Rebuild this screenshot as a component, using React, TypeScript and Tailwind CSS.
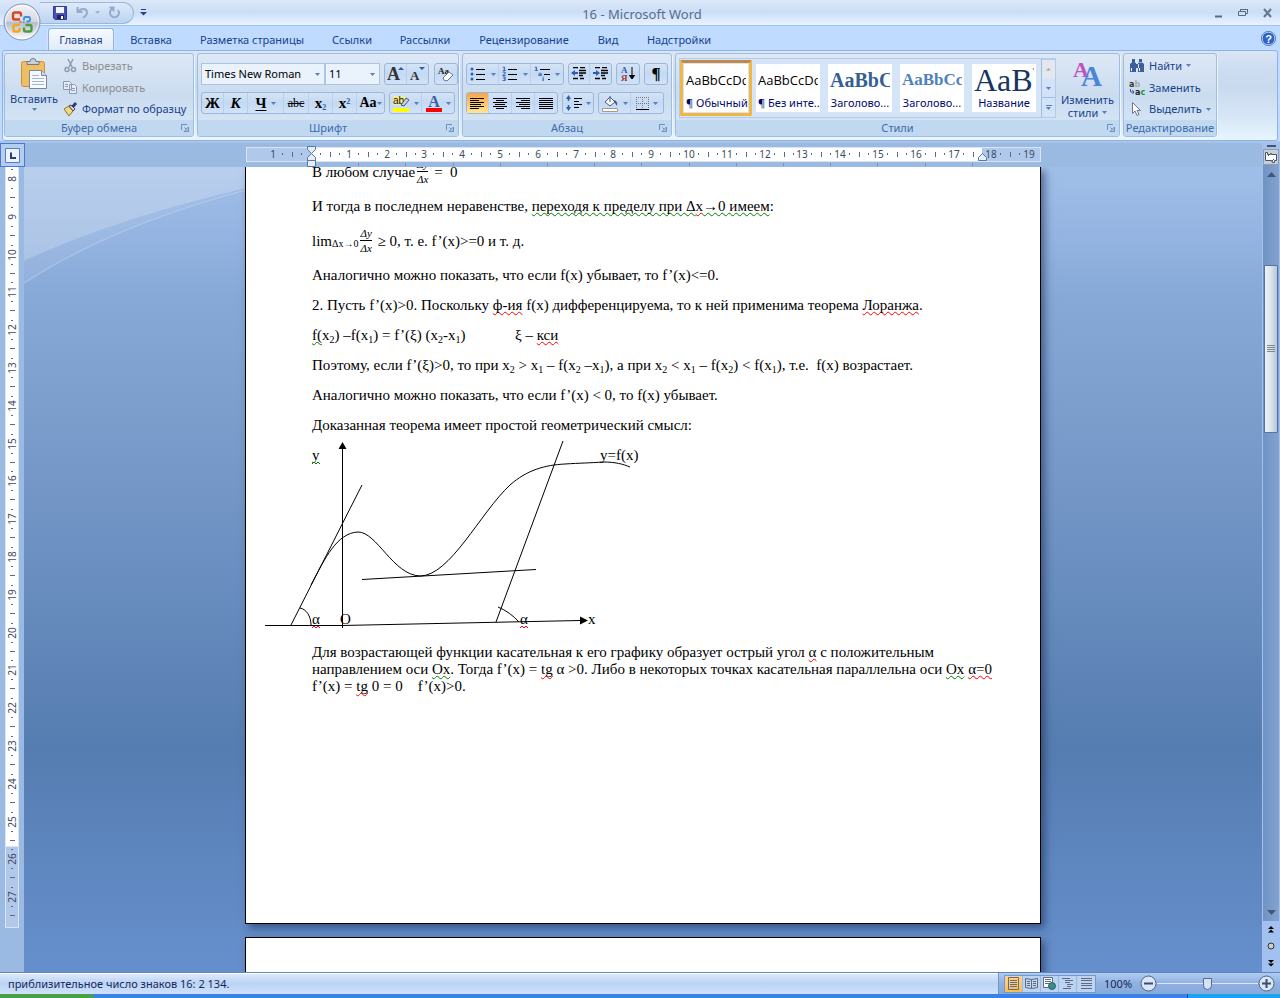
import type { ReactNode } from "react"

interface TabInterface {
  name: string
  width: string
}

const tabs: TabInterface[] = [
  { name: "Главная", width: "w-[66px]" },
  { name: "Вставка", width: "w-[74px]" },
  { name: "Разметка страницы", width: "w-[128px]" },
  { name: "Ссылки", width: "w-[72px]" },
  { name: "Рассылки", width: "w-[74px]" },
  { name: "Рецензирование", width: "w-[124px]" },
  { name: "Вид", width: "w-[44px]" },
  { name: "Надстройки", width: "w-[98px]" },
]

interface StyleInterface {
  name: string
  sample: string
  look: string
}

const styles: StyleInterface[] = [
  { name: "¶ Обычный", sample: "AaBbCcDd", look: "font-['Open_Sans'] text-[13px] text-black" },
  { name: "¶ Без инте...", sample: "AaBbCcDd", look: "font-['Open_Sans'] text-[13px] text-black" },
  { name: "Заголово...", sample: "AaBbCc", look: "font-['Liberation_Serif'] text-[20px] font-bold text-[#365f91]" },
  { name: "Заголово...", sample: "AaBbCc", look: "font-['Liberation_Serif'] text-[17px] font-bold text-[#4f81bd]" },
  { name: "Название", sample: "AaBb", look: "font-['Liberation_Serif'] text-[32px] text-[#17365d]" },
]

const Arrow = ({ color = "#5a7fb8" }: { color?: string }) => (
  <svg width="5" height="3" className="shrink-0" aria-hidden="true">
    <path d="M0 0h5L2.5 3z" fill={color} />
  </svg>
)

const Group = ({ title, width, launcher = true, children }: { title: string; width: string; launcher?: boolean; children: ReactNode }) => (
  <section className={`flex shrink-0 flex-col overflow-hidden rounded-[3px] border border-[#9dbde2] bg-gradient-to-b from-[#dde8f5] via-[#cbdcf0] to-[#d8e8f7] shadow-[1px_1px_0_#eef6ff] ${width}`}>
    <div className="flex min-h-0 flex-1">{children}</div>
    <div className="relative h-4 bg-[#c1d9f0] text-center leading-4 whitespace-nowrap text-[#3e6aaa]">
      {title}
      {launcher && (
        <button aria-label={`${title}: параметры`} className="absolute top-1 right-1">
          <svg width="8" height="8" fill="none" stroke="#6d8fbd">
            <path d="M.5 6V.5H6M3.500 3.500l3 3M7.500 3v4.500H3z" />
          </svg>
        </button>
      )}
    </div>
  </section>
)

const Bar = ({ children }: { children: ReactNode }) => (
  <div className="flex h-[22px] shrink-0 divide-x divide-[#b9cfec] rounded-[3px] border border-[#9ab8de] bg-gradient-to-b from-[#d5e4f6] via-[#c4d9f3] to-[#d2e3f7]">
    {children}
  </div>
)

const Tool = ({ label, width, active, arrow, children }: { label: string; width: string; active?: boolean; arrow?: boolean; children: ReactNode }) => (
  <button
    aria-label={label}
    className={`flex h-5 shrink-0 items-center justify-center gap-1 leading-5 text-black ${width} ${active ? "bg-gradient-to-b from-[#f7a24b] via-[#fcc566] to-[#ffe795]" : ""}`}
  >
    {children}
    {arrow && <Arrow />}
  </button>
)

const Lines = ({ rows }: { rows: number[][] }) => (
  <svg width="15" height="13" stroke="#000" aria-hidden="true">
    {rows.map(([x1, x2], i) => (
      <path key={i} d={`M${x1} ${i * 2 + 1.5}H${x2}`} />
    ))}
  </svg>
)

// an empty list of marks draws plain bullets
const ListIcon = ({ marks = [], step = 0 }: { marks?: string[]; step?: number }) => (
  <svg width="17" height="16" className="overflow-visible" aria-hidden="true">
    {[0, 1, 2].map((i) => (
      <g key={i}>
        {marks[i] ? (
          <text x={i * step} y={i * 5 + 5} fontSize="6" fontWeight="bold" fontFamily="DejaVu Sans" fill="#2f5cae">{marks[i]}</text>
        ) : (
          <circle cx="2" cy={i * 5 + 3} r="1.500" fill="#2f5cae" />
        )}
        <path d={`M${6 + i * step} ${i * 5 + 3.5}H${step ? 16 : 15}`} stroke="#000" />
      </g>
    ))}
  </svg>
)

const OfficeLogo = () => (
  <svg width="38" height="38" viewBox="0 0 38 38" aria-hidden="true">
    <defs>
      <linearGradient id="orb" x1="0" y1="0" x2="0" y2="1">
        <stop offset="0" stopColor="#f4f6f9" />
        <stop offset=".48" stopColor="#d3d8e2" />
        <stop offset=".52" stopColor="#b4bccb" />
        <stop offset="1" stopColor="#ffffff" />
      </linearGradient>
    </defs>
    <circle cx="19" cy="19" r="18" fill="url(#orb)" stroke="#7f93b5" />
    <circle cx="19" cy="19" r="16.500" fill="none" stroke="#fff" strokeOpacity=".7" />
    <g fill="none" strokeWidth="2.400">
      <path d="M17 16.500h-5q-2 0-2-2v-3q0-2 2-2h4q2 0 2 2v2" stroke="#d9481c" />
      <path d="M21 17.500v-2q0-1.500 1.500-1.500h3q1.500 0 1.500 1.500v1.500q0 1.500-1.500 1.500h-2" stroke="#3c8fd6" strokeWidth="1.800" />
      <path d="M16.500 25v2q0 1.500-1.500 1.500h-3q-1.500 0-1.500-1.500v-3q0-2 2-2h4" stroke="#f4a81d" />
      <path d="M21 24.500v2q0 2 2 2h3.500q2 0 2-2v-2.500q0-2-2-2h-4" stroke="#4a9b3c" />
    </g>
    <path d="M16.500 18h2v2h-2z" fill="#e8792b" />
    <path d="M20 18.500h1.500V20H20z" fill="#3c8fd6" />
  </svg>
)

const TitleBar = () => (
  <header className="flex h-[26px] shrink-0 items-center border-b border-[#9cc6f2] bg-gradient-to-b from-[#dce8f8] via-[#cbdef7] to-[#eaf3fe]">
    <div className="ml-[40px] flex h-[22px] w-[94px] items-center rounded-r-full border border-l-0 border-[#9db8dc] bg-gradient-to-b from-[#dfeafa] to-[#bcd3f1] pl-[13px]">
      <button aria-label="Сохранить">
        <svg width="14" height="14">
          <path d="M.5.5h13v13H2L.5 12z" fill="#4a50b8" stroke="#33389a" />
          <path d="M3 1h8v6H3z" fill="#f2f5fc" />
          <path d="M4 9h7v4H4z" fill="#20235e" />
          <path d="M8 10h2v3H8z" fill="#fff" />
        </svg>
      </button>
      <button aria-label="Отменить" className="ml-[9px]">
        <svg width="13" height="13" fill="none" stroke="#94abcf" strokeWidth="2">
          <path d="M1.500 1v5h5M2 6C5 2 11 2 11 6.500c0 2-2 4-4 5.500" />
        </svg>
      </button>
      <span className="ml-[6px]"><Arrow color="#9fb3d2" /></span>
      <button aria-label="Повторить" className="ml-[8px]">
        <svg width="13" height="13" fill="none" stroke="#94abcf" strokeWidth="2">
          <path d="M1.500 1.500h4v4M5 2.500A4.500 4.500 0 1 0 10 4" />
        </svg>
      </button>
    </div>
    <button aria-label="Настройка панели быстрого доступа" className="ml-[6px]">
      <svg width="7" height="7"><path d="M1 .5h5" stroke="#26427c" /><path d="M0 3h7L3.500 6.500z" fill="#26427c" /></svg>
    </button>
    <h1 className="flex-1 pt-[2px] pr-[76px] text-center text-[13px] text-[#5a6b8c]">16 - Microsoft Word</h1>
    <div className="flex items-center gap-[15px] pr-[7px]">
      <button aria-label="Свернуть"><svg width="10" height="10"><path d="M2 8.500h7" stroke="#5b6b85" strokeWidth="2" /></svg></button>
      <button aria-label="Свернуть в окно">
        <svg width="10" height="10" fill="none" stroke="#5b6b85"><path d="M2.500 3V1.500h7v4H8M.5 3.500h7v4h-7zM2 1.500h8" /></svg>
      </button>
      <button aria-label="Закрыть"><svg width="10" height="10"><path d="M1 1l7 8M8 1L1 9" stroke="#66758f" strokeWidth="2" /></svg></button>
    </div>
  </header>
)

const TabRow = () => (
  <nav className="flex h-6 shrink-0 items-end bg-[#bfdbff] pl-[48px]">
    {tabs.map((tab, i) => (
      <button
        key={tab.name}
        className={`h-[22px] shrink-0 pt-px text-center whitespace-nowrap text-[#15428b] ${tab.width} ${i === 0 ? "rounded-t-[3px] border border-b-0 border-[#8db2e3] bg-gradient-to-b from-[#f6faff] to-[#e0ebf8] shadow-[0_0_2px_#fff]" : ""}`}
      >
        {tab.name}
      </button>
    ))}
    <button aria-label="Справка" className="mr-1 mb-1 ml-auto">
      <svg width="15" height="15">
        <circle cx="7.500" cy="7.500" r="6.500" fill="#2d62c9" stroke="#fff" />
        <circle cx="7.500" cy="7.500" r="7" fill="none" stroke="#3c6dbf" />
        <text x="7.500" y="11.500" fontSize="11" fontWeight="bold" textAnchor="middle" fontFamily="Liberation Sans" fill="#fff">?</text>
      </svg>
    </button>
  </nav>
)

const Clipboard = () => (
  <Group title="Буфер обмена" width="w-[190px]">
    <button className="flex w-[58px] shrink-0 flex-col items-center pt-1 text-[#15428b]">
      <svg width="28" height="32" aria-hidden="true">
        <rect x="1.500" y="3.500" width="23" height="25" rx="2" fill="#efbd62" stroke="#c99238" />
        <path d="M7 3.500h3q0-3 3-3t3 3h3v3H7z" fill="#c9ced8" stroke="#70798c" />
        <path d="M9.500 12.500h12l5 5v13h-17z" fill="#f7faff" stroke="#7485a5" />
        <path d="M21.500 12.500v5h5" fill="#cfdcf0" stroke="#7485a5" />
        <path d="M12 17.500h7M12 20.500h12M12 23.500h12M12 26.500h12" stroke="#a4b4cf" />
      </svg>
      <span className="leading-[18px]">Вставить</span>
      <Arrow />
    </button>
    <div className="flex flex-col pt-px">
      <button className="flex h-[22px] items-center gap-1 text-[#8d8d8d]">
        <svg width="15" height="15" fill="none" stroke="#8d9ab5" strokeWidth="1.500">
          <path d="M5 1l4 8M10 1L6 9" /><circle cx="4" cy="11.500" r="2" /><circle cx="10.500" cy="11.500" r="2" />
        </svg>
        Вырезать
      </button>
      <button className="flex h-[22px] items-center gap-1 text-[#8d8d8d]">
        <svg width="15" height="15" fill="#e6ecf6" stroke="#8d9ab5">
          <path d="M.5 1.500h6l2 2v6h-8zM6.500 4.500h5l2 2v7h-7zM2 4.500h3M2 6.500h3M8 8.500h4M8 10.500h4" />
        </svg>
        Копировать
      </button>
      <button className="flex h-[22px] items-center gap-1 text-[#15428b]">
        <svg width="15" height="15">
          <path d="M1 7l5-3 4 5-4 5z" fill="#f3d77f" stroke="#8d7434" />
          <path d="M6 4l2-1 4 4-2 2z" fill="#ddd" stroke="#444" />
          <path d="M9.500 5L13 1" stroke="#2b3f77" strokeWidth="3" />
        </svg>
        <span className="whitespace-nowrap">Формат по образцу</span>
      </button>
    </div>
  </Group>
)

const Combo = ({ label, value, width }: { label: string; value: string; width: string }) => (
  <div className={`relative h-[22px] shrink-0 border border-[#abc3e4] bg-[#eaf2fb] ${width}`}>
    <select aria-label={label} className="h-full w-full appearance-none px-[3px] text-black outline-none">
      <option>{value}</option>
    </select>
    <span className="pointer-events-none absolute top-[9px] right-1"><Arrow /></span>
  </div>
)

const FontGroup = () => (
  <Group title="Шрифт" width="w-[262px]">
    <div className="flex flex-col gap-[7px] px-[3px] pt-[9px] font-['Liberation_Serif']">
      <div className="flex font-['Noto_Sans']">
        <Combo label="Шрифт" value="Times New Roman" width="w-[124px]" />
        <Combo label="Размер" value="11" width="w-[55px]" />
        <div className="ml-1 flex gap-[5px] font-['Liberation_Serif']">
          <Bar>
            <Tool label="Увеличить размер" width="w-[22px]">
              <svg width="18" height="18" fontFamily="Liberation Serif" fontWeight="bold">
                <text x="0" y="15" fontSize="18" fill="#333">A</text>
                <path d="M11 5h6l-3-3z" fill="#2f5cae" />
              </svg>
            </Tool>
            <Tool label="Уменьшить размер" width="w-[21px]">
              <svg width="18" height="18" fontFamily="Liberation Serif" fontWeight="bold">
                <text x="1" y="15" fontSize="13" fill="#333">A</text>
                <path d="M10 2h6l-3 3z" fill="#2f5cae" />
              </svg>
            </Tool>
          </Bar>
          <Bar>
            <Tool label="Очистить формат" width="w-[22px]">
              <svg width="18" height="17">
                <text x="1" y="8" fontSize="9" fontWeight="bold" fontFamily="Liberation Serif" fill="#222">Aa</text>
                <path d="M6 12l6-6 4 3-6 6q-4 0-4-3z" fill="#fff" stroke="#66779b" />
              </svg>
            </Tool>
          </Bar>
        </div>
      </div>
      <div className="flex gap-1">
        <Bar>
          <Tool label="Полужирный" width="w-[22px]"><b className="text-[15px]">Ж</b></Tool>
          <Tool label="Курсив" width="w-[24px]"><b className="text-[15px] italic">К</b></Tool>
          <Tool label="Подчеркнутый" width="w-[36px]" arrow><b className="text-[15px] underline underline-offset-2">Ч</b></Tool>
          <Tool label="Зачеркнутый" width="w-[25px]"><b className="text-[12px] font-normal line-through">abc</b></Tool>
          <Tool label="Подстрочный" width="w-[24px]"><b className="text-[15px]">x<sub className="text-[8px] text-[#2f5cae]">2</sub></b></Tool>
          <Tool label="Надстрочный" width="w-[24px]"><b className="text-[15px]">x<sup className="text-[8px] text-[#2f5cae]">2</sup></b></Tool>
          <Tool label="Регистр" width="w-[27px]"><b className="text-[14px]">Aa</b><span className="-ml-1"><Arrow /></span></Tool>
        </Bar>
        <Bar>
          <Tool label="Цвет выделения" width="w-[32px]" arrow>
            <svg width="17" height="17">
              <path d="M0 1h12v9H0z" fill="#f7f08a" />
              <text x="0" y="9" fontSize="10" fontFamily="Liberation Sans" fill="#111">ab</text>
              <path d="M8 10l5-7 3 2-5 6z" fill="#c6d0e2" stroke="#4c5a78" />
              <path d="M0 13h16v4H0z" fill="#ff0" />
            </svg>
          </Tool>
          <Tool label="Цвет текста" width="w-[32px]" arrow>
            <svg width="16" height="17" className="overflow-visible">
              <text x="8" y="12" fontSize="16" fontWeight="bold" textAnchor="middle" fontFamily="Liberation Serif" fill="#3b5fa3">A</text>
              <path d="M0 13h16v4H0z" fill="red" />
            </svg>
          </Tool>
        </Bar>
      </div>
    </div>
  </Group>
)

const ParagraphGroup = () => (
  <Group title="Абзац" width="w-[210px]">
    <div className="flex flex-col gap-[7px] px-[3px] pt-[9px]">
      <div className="flex gap-1">
        <Bar>
          <Tool label="Маркеры" width="w-[32px]" arrow><ListIcon /></Tool>
          <Tool label="Нумерация" width="w-[32px]" arrow><ListIcon marks={["1", "2", "3"]} /></Tool>
          <Tool label="Многоуровневый список" width="w-[32px]" arrow><ListIcon marks={["1", "a", "i"]} step={4} /></Tool>
        </Bar>
        <Bar>
          <Tool label="Уменьшить отступ" width="w-[21px]">
            <svg width="16" height="14"><path d="M2 .5h5M9 .5h5M8 3.500h7M8 6h7M8 8.500h4M2 11.500h5M9 11.500h4" stroke="#000" strokeWidth="1.500" /><path d="M0 6l4-3v2h3v2H4v2z" fill="#2f5cae" /></svg>
          </Tool>
          <Tool label="Увеличить отступ" width="w-[21px]">
            <svg width="16" height="14"><path d="M2 .5h5M9 .5h5M8 3.500h7M8 6h7M8 8.500h4M2 11.500h5M9 11.500h4" stroke="#000" strokeWidth="1.500" /><path d="M7 6L3 3v2H0v2h3v2z" fill="#2f5cae" /></svg>
          </Tool>
        </Bar>
        <Bar>
          <Tool label="Сортировка" width="w-[22px]">
            <svg width="16" height="18" fontFamily="Liberation Serif" fontWeight="bold" fontSize="9">
              <text x="1" y="8" fill="#2f5cae">А</text>
              <text x="1" y="16" fill="#9b3a32">Я</text>
              <path d="M12 2v11M9.500 10.500L12 14l2.500-3.500z" stroke="#000" />
            </svg>
          </Tool>
        </Bar>
        <Bar>
          <Tool label="Знаки абзаца" width="w-[22px]"><span className="font-['Liberation_Serif'] text-[17px] font-bold">¶</span></Tool>
        </Bar>
      </div>
      <div className="flex gap-1">
        <Bar>
          <Tool label="По левому краю" width="w-[22px]" active><Lines rows={[[0, 14], [0, 9], [0, 14], [0, 11], [0, 14], [0, 9]]} /></Tool>
          <Tool label="По центру" width="w-[23px]"><Lines rows={[[0, 14], [3, 11], [0, 14], [2, 12], [0, 14], [3, 11]]} /></Tool>
          <Tool label="По правому краю" width="w-[23px]"><Lines rows={[[0, 14], [5, 14], [0, 14], [3, 14], [0, 14], [5, 14]]} /></Tool>
          <Tool label="По ширине" width="w-[22px]"><Lines rows={[[0, 14], [0, 14], [0, 14], [0, 14], [0, 14], [0, 14]]} /></Tool>
        </Bar>
        <Bar>
          <Tool label="Интервал" width="w-[30px]" arrow>
            <svg width="16" height="16">
              <path d="M2.500 3v3M2.500 10v3" stroke="#2f5cae" strokeWidth="1.500" />
              <path d="M0 4l2.500-4L5 4zM0 12l2.500 4L5 12z" fill="#2f5cae" />
              <path d="M8 3.500h8M8 6.500h5M8 9.500h8M8 12.500h5" stroke="#000" />
            </svg>
          </Tool>
        </Bar>
        <Bar>
          <Tool label="Заливка" width="w-[32px]" arrow>
            <svg width="17" height="17">
              <path d="M3 7l5-5 5 5-5 4z" fill="#f4f6fa" stroke="#4d5c7c" />
              <path d="M8 7V1" stroke="#4d5c7c" />
              <path d="M12 5q4 1 3 6l-2-3z" fill="#35589c" />
              <path d="M.5 13.500h15v3H.5z" fill="#fff" stroke="#a09c86" />
            </svg>
          </Tool>
          <Tool label="Границы" width="w-[32px]" arrow>
            <svg width="13" height="13" fill="none" stroke="#777" strokeDasharray="1 1">
              <path d="M.5 0v12M6.500 0v12M12.500 0v12M0 .5h13M0 6.500h13" />
              <path d="M0 12.500h13" stroke="#000" strokeDasharray="none" />
            </svg>
          </Tool>
        </Bar>
      </div>
    </div>
  </Group>
)

const StylesGroup = () => (
  <Group title="Стили" width="w-[445px]">
    <div className="mt-1 ml-[3px] flex h-[60px] w-[377px] shrink-0 border border-[#b3cbe8] bg-[#d5e5f7]">
      {styles.map((style, i) => (
        <button
          key={i}
          className={`mt-px flex h-[56px] w-[72px] shrink-0 flex-col items-center border-[3px] pt-px ${i === 0 ? "rounded-[2px] border-[#f3b63f] border-t-[#c18a4a]" : "border-transparent"}`}
        >
          <span className="flex h-12 w-16 flex-col overflow-hidden bg-white px-[2px]">
            <span className={`h-[32px] shrink-0 overflow-hidden text-left leading-[32px] ${style.look}`}>{style.sample}</span>
            <span className="text-center text-[11px] leading-[14px] whitespace-nowrap text-[#000a6e]">{style.name}</span>
          </span>
        </button>
      ))}
      <div className="ml-auto flex w-[14px] flex-col divide-y divide-[#9fbce2] border-l border-[#9fbce2] bg-[#d3e3f7]">
        <button aria-label="Вверх" className="flex flex-1 rotate-180 items-center justify-center bg-[#e4e8ee]"><Arrow color="#a6a9ad" /></button>
        <button aria-label="Вниз" className="flex flex-1 items-center justify-center"><Arrow /></button>
        <button aria-label="Все стили" className="flex flex-1 flex-col items-center justify-center gap-px"><span className="h-px w-[6px] bg-[#5a7fb8]" /><Arrow /></button>
      </div>
    </div>
    <button className="flex flex-1 flex-col items-center pt-[5px] leading-[13px] text-[#15428b]">
      <svg width="30" height="30" fontFamily="Liberation Serif" fontWeight="bold">
        <text x="0" y="18" fontSize="22" fill="#c04fc0">A</text>
        <text x="8" y="27" fontSize="29" fill="#4a86d8">A</text>
      </svg>
      <span className="mt-1">Изменить</span>
      <span className="flex items-center gap-1">стили <Arrow /></span>
    </button>
  </Group>
)

const EditGroup = () => (
  <Group title="Редактирование" width="w-[94px]" launcher={false}>
    <div className="flex flex-col pt-px pl-[5px] text-[#15428b]">
      <button className="flex h-[22px] items-center gap-1">
        <svg width="16" height="14">
          <path d="M3 0h3v4H3zM10 0h3v4h-3zM1 5q2-3 6-1v9H1zM15 5q-2-3-6-1v9h6zM6 5h4v4H6z" fill="#3d5f99" />
          <path d="M2.500 9v3M10.500 9v3" stroke="#fff" />
        </svg>
        Найти <Arrow />
      </button>
      <button className="flex h-[22px] items-center gap-1">
        <svg width="16" height="16" className="overflow-visible" fontFamily="DejaVu Sans" fontWeight="bold" fontSize="8">
          <text x="0" y="7" fill="#333">a<tspan fill="#aaa">b</tspan></text>
          <text x="6" y="15" fill="#222">a<tspan fill="#23902f">c</tspan></text>
          <path d="M1.500 9v3H5M3.500 10L5 12l-1.500 2" fill="none" stroke="#2f5cae" />
        </svg>
        Заменить
      </button>
      <button className="flex h-[22px] items-center gap-1">
        <svg width="16" height="16"><path d="M3.500 1.500v11l2.500-2.500 2 4.500 2-1-2-4h3.500z" fill="#fff" stroke="#6b7690" /></svg>
        Выделить <Arrow />
      </button>
    </div>
  </Group>
)

const HorizontalRuler = () => {
  const cells = Array.from({ length: 21 }, (_, i) => i - 1)
  return (
    <svg width="796" height="24" className="shrink-0" aria-hidden="true">
      <path d="M1 4h795v15H1z" fill="#d9e5f6" />
      <path d="M2 5h793v13H2z" fill="#b0c9eb" />
      <path d="M66 5h671v13H66z" fill="#fff" />
      {cells.map((n) => {
        const x = Math.round(66 + n * 37.8)
        return (
          <g key={n} stroke="#5a6b88">
            {n !== 0 && n < 20 && <text x={x} y="15" fontSize="10" textAnchor="middle" fontFamily="Noto Sans" fill="#3e4a63" stroke="none">{Math.abs(n)}</text>}
            {x > 12 && x < 780 && <path d={`M${x + 9.5} 10v2M${x + 28.5} 10v2`} />}
            {x < 770 && <path d={`M${x + 19.5} 9v5`} />}
          </g>
        )
      })}
      {Array.from({ length: 14 }, (_, i) => (
        <path key={i} d={`M${Math.round(66 + (i + 1) * 47.2) + 0.5} 20v3`} stroke="#8a8f98" />
      ))}
      <g fill="#e6eefa" stroke="#5677a8">
        <path d="M62.500 3.500h8v3l-4 4-4-4zM66.500 10.500l4 4v3h-8v-3zM62.500 17.500h8v6h-8z" />
        <path d="M737.500 10.500l4 4v3h-8v-3z" />
      </g>
    </svg>
  )
}

const VerticalRuler = () => (
  <svg width="24" height="761" className="shrink-0" aria-hidden="true">
    <path d="M5 0h14v761H5z" fill="#d9e5f6" />
    <path d="M6 0h12v679H6z" fill="#fff" />
    <path d="M6 680h12v80H6z" fill="#b0c9eb" />
    {Array.from({ length: 20 }, (_, i) => {
      const y = Math.round(12 + i * 37.8)
      return (
        <g key={i} stroke="#5a6b88">
          <text x="0" y="0" transform={`translate(16 ${y}) rotate(-90)`} fontSize="10" textAnchor="middle" fontFamily="Noto Sans" fill="#3e4a63" stroke="none">{i + 8}</text>
          <path d={`M11 ${y - 9.5}h2M10 ${y + 18.5}h5M11 ${y + 9.5}h2`} />
        </g>
      )
    })}
  </svg>
)

const Wave = ({ green, children }: { green?: boolean; children: ReactNode }) => (
  <span className={`underline decoration-wavy decoration-1 underline-offset-1 [text-decoration-skip-ink:none] ${green ? "decoration-[#008000]" : "decoration-[#ff0000]"}`}>{children}</span>
)

const Sub = ({ children }: { children: ReactNode }) => <sub className="bottom-[-3px] text-[10px]">{children}</sub>

const Fraction = () => (
  <span className="mx-[2px] inline-flex flex-col text-center text-[11px] leading-[14px] italic">
    <span>Δy</span>
    <span className="border-t border-black">Δx</span>
  </span>
)

const Graph = () => (
  <svg width="390" height="190" className="-mt-1 -ml-[47px]" fill="none" stroke="#000" role="img" aria-label="График y=f(x) с касательными">
    <path d="M77.500 187V6M0 184.500H77L315 179.500" />
    <path d="M77.500 1l4 7h-8zM323 179.500l-8-4v8z" fill="#000" stroke="none" />
    <path d="M26 184L97 44M97 138.500L271 128.500M231 181L298 0" />
    <path d="M46 144C60 117 72 92 93 91C112 91 128 134 155 135C185 135 215 72 245 44C262 29 280 24 300 23C315 22 325 22 338 21C350 21 358 23 365 26" />
    <path d="M35 167C41 168 46 175 46 184M233 166Q245 171 254 181" />
    <g fill="#000" stroke="none" fontSize="15" fontFamily="Liberation Serif">
      <text x="47" y="19">y</text>
      <text x="335" y="19">y=f(x)</text>
      <text x="47" y="183">α</text>
      <text x="75" y="183">O</text>
      <text x="255" y="183">α</text>
      <text x="323" y="183">x</text>
    </g>
    <path d="M47 23l2-2 2 2 2-2 2 2" stroke="#008000" />
    <path d="M47 187l2-2 2 2 2-2 2 2M255 187l2-2 2 2 2-2 2 2" stroke="#f00" />
  </svg>
)

const Page = () => (
  <article className="flex h-[757px] w-[796px] shrink-0 flex-col border border-t-0 border-black bg-white pl-[66px] font-['Liberation_Serif'] text-[15px] leading-5 whitespace-nowrap text-black shadow-[4px_4px_8px_rgba(20,40,80,0.55)]">
    <div className="-mt-[10px] flex flex-col gap-[10px]">
      <p className="flex h-[29px] items-center">В любом случае <Fraction />&nbsp;=&nbsp; 0</p>
      <p>И тогда в последнем неравенстве, <Wave green>переходя к пределу при Δ</Wave><Wave>x</Wave><Wave green>→0 имеем</Wave>:</p>
      <p className="flex h-[29px] items-center">lim<Sub>Δx→0</Sub><Fraction />&nbsp;≥ 0, т. е. f’(x)&gt;=0 и т. д.</p>
      <p>Аналогично можно показать, что если f(x) убывает, то f’(x)&lt;=0.</p>
      <p>2. Пусть f’(x)&gt;0. Поскольку <Wave>ф-ия</Wave> f(x) дифференцируема, то к ней применима теорема <Wave>Лоранжа</Wave>.</p>
      <p className="flex"><span className="w-[203px]"><Wave green>f(</Wave>x<Sub>2</Sub>) –f(x<Sub>1</Sub>) = f’(ξ) (x<Sub>2</Sub>-x<Sub>1</Sub>)</span><span>ξ – <Wave>кси</Wave></span></p>
      <p>Поэтому, если f’(ξ)&gt;0, то при x<Sub>2</Sub> &gt; x<Sub>1</Sub> – f(x<Sub>2</Sub> –x<Sub>1</Sub>), а при x<Sub>2</Sub> &lt; x<Sub>1</Sub> – f(x<Sub>2</Sub>) &lt; f(x<Sub>1</Sub>), т.е.&nbsp; f(x) возрастает.</p>
      <p>Аналогично можно показать, что если f’(x) &lt; 0, то f(x) убывает.</p>
      <p>Доказанная теорема имеет простой геометрический смысл:</p>
    </div>
    <div className="pt-[10px]"><Graph /></div>
    <p className="mt-[13px] leading-[17px]">
      Для возрастающей функции касательная к его графику образует острый угол <Wave>α</Wave> с положительным<br />
      направлением оси <Wave green>Ох</Wave>. Тогда f’(x) = <Wave>tg</Wave> α &gt;0. Либо в некоторых точках касательная параллельна оси <Wave green>Ох</Wave> <Wave>α=0</Wave><br />
      f’(x) = <Wave>tg</Wave> 0 = 0&nbsp;&nbsp;&nbsp; f’(x)&gt;0.
    </p>
  </article>
)

const ScrollBar = () => (
  <aside className="flex w-[18px] shrink-0 flex-col items-center bg-[#a3c1ee]">
    <span className="mt-[2px] h-[2px] w-[9px] shrink-0 bg-[#46536e]" />
    <button aria-label="Линейка" className="mt-[2px] flex h-4 w-4 shrink-0 items-center justify-center border border-[#8f9bb0] bg-[#c9cdd5]">
      <svg width="13" height="13" fill="#fff" stroke="#44546f"><path d="M.5 1.500h2v2h3v-1h1v1h5v6h-2v2h-2v-1h-1v-1h-6z" /><path d="M3 5l1.500-1.500M7 10l2-2" /></svg>
    </button>
    <div className="flex w-4 flex-1 flex-col items-center bg-gradient-to-r from-[#6f93c3] to-[#84a3cf]">
      <button aria-label="Вверх" className="flex h-[18px] shrink-0 items-center"><svg width="9" height="5"><path d="M0 5h9L4.500 0z" fill="#435578" /></svg></button>
      <div className="mt-[82px] flex h-[168px] w-[14px] shrink-0 flex-col items-center justify-center gap-px rounded-[1px] border border-[#5a71a6] bg-gradient-to-r from-[#eef2f5] via-[#dbe4ec] to-[#b3c6da]">
        <svg width="8" height="8" stroke="#7c8894"><path d="M0 .5h8M0 2.500h8M0 4.500h8M0 6.500h8" /></svg>
      </div>
      <button aria-label="Вниз" className="mt-auto flex h-[18px] shrink-0 items-center"><svg width="9" height="5"><path d="M0 0h9L4.500 5z" fill="#435578" /></svg></button>
    </div>
    <div className="flex h-[51px] shrink-0 flex-col items-center justify-around">
      <button aria-label="Предыдущая страница"><svg width="6" height="7"><path d="M0 3l3-3 3 3zM0 6.500l3-3 3 3z" /></svg></button>
      <button aria-label="Выбор объекта"><svg width="8" height="8"><circle cx="4" cy="4" r="3" fill="#ccc" stroke="#333" /></svg></button>
      <button aria-label="Следующая страница"><svg width="6" height="7"><path d="M0 0h6L3 3zM0 3.500h6l-3 3z" /></svg></button>
    </div>
  </aside>
)

const Workspace = () => (
  <main className="flex min-h-0 flex-1 bg-[#9bbae2]">
    <div className="flex w-6 shrink-0 flex-col">
      <button aria-label="Позиция табуляции" className="flex h-[24px] w-[25px] shrink-0 items-center justify-center border border-[#4a79cf] bg-[#b5cdf0]">
        <svg width="15" height="15"><path d="M.5.5h14v14H.5z" fill="#edf3fc" stroke="#5a7fc0" /><path d="M6 4.500v5.500h5" fill="none" stroke="#28406b" strokeWidth="2" /></svg>
      </button>
      <VerticalRuler />
    </div>
    <div className="flex min-w-0 flex-1 flex-col">
      <div className="flex h-6 shrink-0 justify-center"><HorizontalRuler /></div>
      <div className="relative flex min-h-0 flex-1 flex-col items-center gap-[13px] overflow-hidden bg-[linear-gradient(#a0bfe8_0%,#94b3e0_9%,#86a9d7_16%,#7598c8_38%,#567db1_72%,#6690cd_100%)]">
        <svg width="222" height="120" className="absolute top-0 left-0" aria-hidden="true">
          <path d="M0 0h222v21Q90 58 0 116z" fill="#fff" fillOpacity=".07" />
          <path d="M0 0h222v21Q90 52 0 94z" fill="#fff" fillOpacity=".2" />
          <path d="M222 23Q90 58 0 116" fill="none" stroke="#fff" strokeOpacity=".2" strokeWidth="1.500" />
        </svg>
        <div className="relative"><Page /></div>
        <div className="relative h-10 w-[796px] shrink-0 border border-black bg-white shadow-[4px_4px_8px_rgba(20,40,80,0.55)]" />
      </div>
    </div>
    <ScrollBar />
  </main>
)

const ViewIcon = ({ d }: { d: string }) => (
  <svg width="13" height="13" fill="none" stroke="#5f6b80"><path d={d} /></svg>
)

const StatusBar = () => (
  <footer className="flex h-[22px] shrink-0 items-center border-t border-[#5f86bd] bg-gradient-to-b from-[#e0ebfb] via-[#bbd3f4] to-[#d0e2fa] text-[#15285b] shadow-[inset_0_1px_0_#fff]">
    <span className="flex-1 pl-2">приблизительное число знаков 16: 2 134.</span>
    <div className="flex h-full w-[282px] shrink-0 items-center border-l border-[#6f94c6] bg-gradient-to-b from-[#b0cbf2] via-[#8fb1e0] to-[#86a9dc] pl-[5px]">
      <div className="flex h-[18px] shrink-0 divide-x divide-[#9bb9e3] border border-[#7399cf] bg-[#bdd3f2]">
        <button aria-label="Разметка страницы" className="flex w-[18px] items-center justify-center bg-gradient-to-b from-[#fbd293] to-[#fdbd4a]"><ViewIcon d="M1.500.5h10v12h-10zM3 3.500h7M3 5.500h7M3 7.500h7M3 9.500h7" /></button>
        <button aria-label="Режим чтения" className="flex w-[18px] items-center justify-center"><ViewIcon d="M6.500 2.500l-6-1v9l6 1 6-1v-9zv9M2 4.500h3M2 6.500h3M2 8.500h3M8 4.500h3M8 6.500h3M8 8.500h3" /></button>
        <button aria-label="Веб-документ" className="flex w-[18px] items-center justify-center">
          <svg width="13" height="13"><path d="M.5.500h9v10h-9zM2 2.500h6M2 4.500h6M2 6.500h5" fill="#fff" stroke="#5f6b80" /><circle cx="9" cy="9" r="3.500" fill="#3a8f6e" stroke="#2c5f9b" /></svg>
        </button>
        <button aria-label="Структура" className="flex w-[18px] items-center justify-center"><ViewIcon d="M1 1.500h8M4 3.500h8M4 5.500h5M6 7.500h6M6 9.500h4M2 11.500h8" /></button>
        <button aria-label="Черновик" className="flex w-[18px] items-center justify-center"><ViewIcon d="M1 1.500h11M1 3.500h11M1 6.500h11M1 8.500h11M1 11.500h11" /></button>
      </div>
      <label htmlFor="zoom" className="ml-2 w-[36px] shrink-0">100%</label>
      <button aria-label="Уменьшить" className="shrink-0">
        <svg width="17" height="17"><circle cx="8.500" cy="8.500" r="7.500" fill="#d9e6f8" stroke="#4f6488" /><path d="M4 8.500h9" stroke="#3d4d6b" strokeWidth="2" /></svg>
      </button>
      <input
        id="zoom"
        type="range"
        defaultValue="50"
        className="h-4 min-w-0 flex-1 appearance-none bg-[linear-gradient(#dce8fa,#dce8fa)] bg-[length:100%_1px] bg-center bg-no-repeat [&::-webkit-slider-thumb]:h-[12px] [&::-webkit-slider-thumb]:w-[9px] [&::-webkit-slider-thumb]:appearance-none [&::-webkit-slider-thumb]:rounded-b-[5px] [&::-webkit-slider-thumb]:border [&::-webkit-slider-thumb]:border-[#54698f] [&::-webkit-slider-thumb]:bg-[#d5e2f6]"
      />
      <button aria-label="Увеличить" className="mr-[5px] shrink-0">
        <svg width="17" height="17"><circle cx="8.500" cy="8.500" r="7.500" fill="#d9e6f8" stroke="#4f6488" /><path d="M4 8.500h9M8.500 4v9" stroke="#3d4d6b" strokeWidth="2" /></svg>
      </button>
    </div>
  </footer>
)

const App = () => {
  return (
    <div className="relative flex h-screen flex-col overflow-hidden bg-[#bfdbff] font-['Noto_Sans',sans-serif] text-[11px] leading-4">
      <TitleBar />
      <button aria-label="Кнопка Office" className="absolute top-[3px] left-[3px]"><OfficeLogo /></button>
      <TabRow />
      <div className="mx-[2px] flex h-[91px] shrink-0 gap-[3px] overflow-hidden rounded-[3px] border border-[#8db2e3] bg-[linear-gradient(#dbe6f4_0%,#cfdef1_15%,#c9daef_40%,#d8e7f6_75%,#e6f5fd_100%)] px-px pt-[2px] pb-[3px]">
        <Clipboard />
        <FontGroup />
        <ParagraphGroup />
        <StylesGroup />
        <EditGroup />
      </div>
      <div className="h-[2px] shrink-0 bg-[#a9c4e8]" />
      <Workspace />
      <StatusBar />
      <div className="flex h-1 shrink-0 bg-[#3a82e4]">
        <div className="w-[94px] rounded-tr-[4px] bg-[#4aa046]" />
        <div className="ml-auto w-[93px] border-l border-[#0d4ea3] bg-[#1aa3ee]" />
      </div>
    </div>
  )
}

export default App
